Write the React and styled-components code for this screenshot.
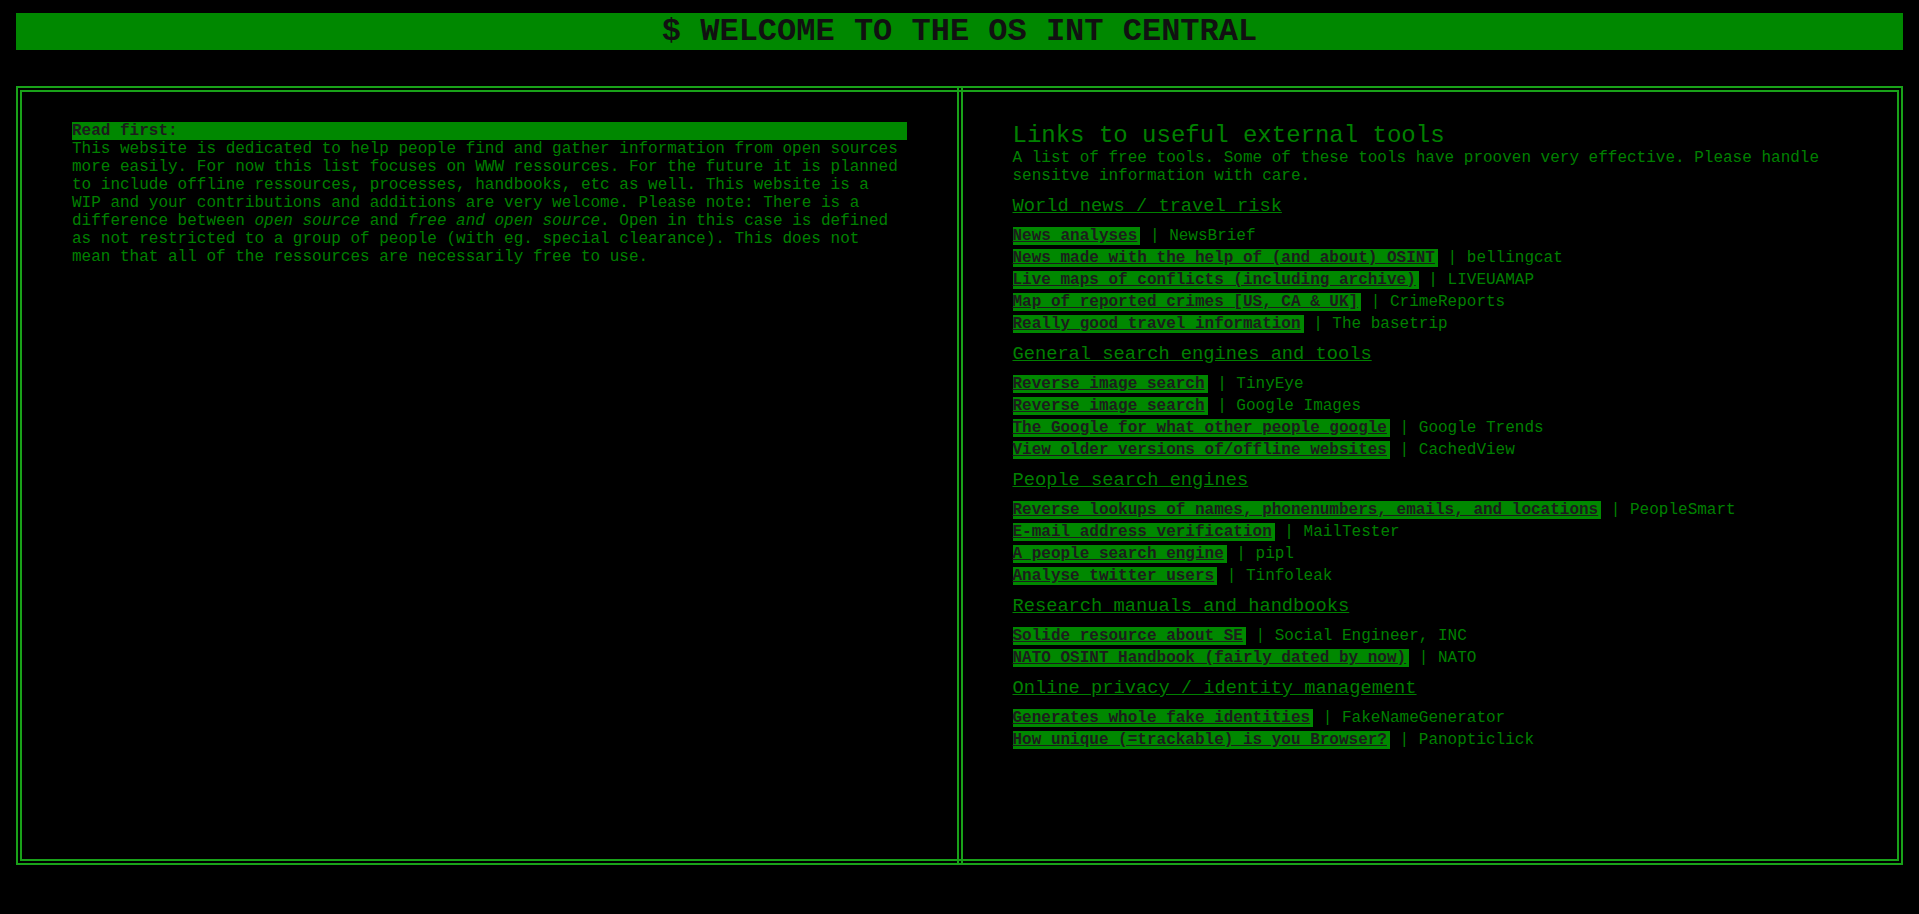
import React from "react";
import styled, { createGlobalStyle } from "styled-components";

const GlobalStyle = createGlobalStyle`
  html, body {
    margin: 0;
    padding: 0;
    background: #000;
  }
  body {
    font-family: "Liberation Mono", "Courier New", monospace;
    font-size: 16px;
    color: #008000;
  }
`;

const Page = styled.div`
  padding: 13px 16px 0;
`;

const Banner = styled.h1`
  margin: 0 0 36px;
  height: 37px;
  line-height: 37px;
  background: #008800;
  color: #111;
  font-size: 32px;
  font-weight: bold;
  text-align: center;
`;

const Frame = styled.div`
  box-sizing: border-box;
  height: 779px;
  border: 6px double #19a219;
  display: flex;
`;

const Cell = styled.div`
  flex: 1 1 0;
  box-sizing: content-box;
  min-width: 0;
  padding: 30px 50px;
`;

const LeftCell = styled(Cell)`
  margin: -6px 0;
  padding-top: 36px;
  border-right: 6px double #19a219;
`;

const Notice = styled.div`
  line-height: normal;
`;

const NoticeTitle = styled.div`
  background: #008800;
  color: #1c1c1c;
  font-weight: bold;
`;

const NoticeText = styled.p`
  margin: 0;
  color: #008000;
`;

const Title = styled.h2`
  margin: 0;
  font-size: 24px;
  font-weight: normal;
  line-height: normal;
`;

const Subtitle = styled.p`
  margin: 0 0 10px;
`;

const SectionHeading = styled.h3`
  margin: 8px 0 8px;
  font-size: 18.72px;
  font-weight: normal;
  line-height: normal;
  text-decoration: underline;
`;

const Row = styled.div`
  line-height: 22px;
  white-space: nowrap;
`;

const ToolLink = styled.a`
  background: #008800;
  color: #1c1c1c;
  font-weight: bold;
  text-decoration: underline;
  padding-right: 3px;
`;

const sections = [
  {
    title: "World news / travel risk",
    items: [
      ["News analyses", "NewsBrief"],
      ["News made with the help of (and about) OSINT", "bellingcat"],
      ["Live maps of conflicts (including archive)", "LIVEUAMAP"],
      ["Map of reported crimes [US, CA & UK]", "CrimeReports"],
      ["Really good travel information", "The basetrip"],
    ],
  },
  {
    title: "General search engines and tools",
    items: [
      ["Reverse image search", "TinyEye"],
      ["Reverse image search", "Google Images"],
      ["The Google for what other people google", "Google Trends"],
      ["View older versions of/offline websites", "CachedView"],
    ],
  },
  {
    title: "People search engines",
    items: [
      ["Reverse lookups of names, phonenumbers, emails, and locations", "PeopleSmart"],
      ["E-mail address verification", "MailTester"],
      ["A people search engine", "pipl"],
      ["Analyse twitter users", "Tinfoleak"],
    ],
  },
  {
    title: "Research manuals and handbooks",
    items: [
      ["Solide resource about SE", "Social Engineer, INC"],
      ["NATO OSINT Handbook (fairly dated by now)", "NATO"],
    ],
  },
  {
    title: "Online privacy / identity management",
    items: [
      ["Generates whole fake identities", "FakeNameGenerator"],
      ["How unique (=trackable) is you Browser?", "Panopticlick"],
    ],
  },
];

export default function App() {
  return (
    <>
      <GlobalStyle />
      <Page>
        <Banner>$ WELCOME TO THE OS INT CENTRAL</Banner>
        <Frame>
          <LeftCell>
            <Notice>
              <NoticeTitle>Read first:</NoticeTitle>
              <NoticeText>
                This website is dedicated to help people find and gather information from open
                sources more easily. For now this list focuses on WWW ressources. For the future it
                is planned to include offline ressources, processes, handbooks, etc as well. This
                website is a WIP and your contributions and additions are very welcome. Please note:
                There is a difference between <i>open source</i> and <i>free and open source</i>.
                Open in this case is defined as not restricted to a group of people (with eg. special
                clearance). This does not mean that all of the ressources are necessarily free to use.
              </NoticeText>
            </Notice>
          </LeftCell>
          <Cell>
            <Title>Links to useful external tools</Title>
            <Subtitle>
              A list of free tools. Some of these tools have prooven very effective. Please handle
              sensitve information with care.
            </Subtitle>
            {sections.map((s) => (
              <section key={s.title}>
                <SectionHeading>{s.title}</SectionHeading>
                {s.items.map(([label, source], i) => (
                  <Row key={i}>
                    <ToolLink href="#">{label}</ToolLink> | {source}
                  </Row>
                ))}
              </section>
            ))}
          </Cell>
        </Frame>
      </Page>
    </>
  );
}
